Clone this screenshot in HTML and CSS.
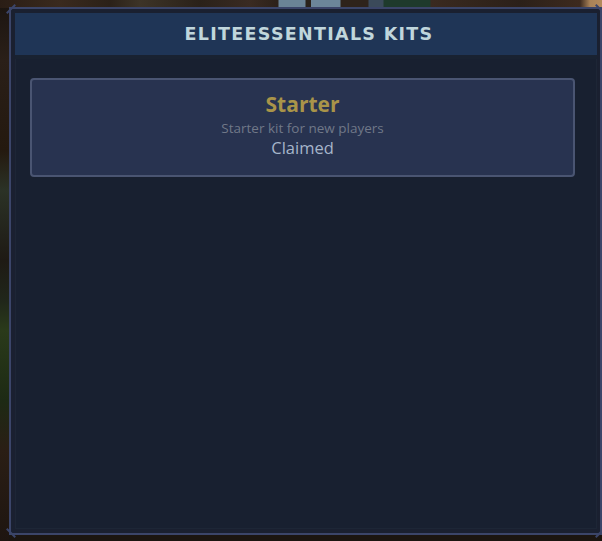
FILE: index.html
```html
<!DOCTYPE html>
<html>
<head>
<meta charset="utf-8">
<link rel="stylesheet" href="styles.css">
</head>
<body>
<div class="panel">
  <span class="notch tl"></span>
  <span class="notch tr"></span>
  <span class="notch bl"></span>
  <span class="notch br"></span>
  <div class="frame">
    <div class="header"><h1 class="title">ELITEESSENTIALS KITS</h1></div>
    <div class="content">
      <div class="kit">
        <div class="kit-name">Starter</div>
        <div class="kit-desc">Starter kit for new players</div>
        <div class="kit-status">Claimed</div>
      </div>
    </div>
  </div>
</div>
</body>
</html>
```

FILE: styles.css
```css
html, body {
  margin: 0;
  padding: 0;
}
body {
  width: 602px;
  height: 541px;
  overflow: hidden;
  padding-top: 7px;
  box-sizing: border-box;
  padding-left: 9px;
  background:
    linear-gradient(90deg,
      #2a1d15 0, #3a2a1e 60px, #2b2118 110px, #3d3427 140px, #2a2119 200px,
      #3a2b22 250px, #2c2119 278px,
      #6b8496 279px, #6b8496 305px, #2a221a 306px, #2a221a 311px,
      #6c8699 311px, #6c8699 340px, #2e231b 341px, #2e231b 368px,
      #3b4a5a 369px, #3b4a5a 383px, #1e3a2c 384px, #1e3a2c 430px,
      #3a2a20 431px, #2b2019 520px, #3d2a1e 580px, #a88258 590px, #b38a5c 602px)
      top left / 602px 8px no-repeat,
    linear-gradient(180deg,
      #1a1410 0, #2a1f18 60px, #24190f 150px, #2b3226 190px, #1e1a14 260px,
      #20261a 300px, #2a3a1a 330px, #1d2a14 400px, #2a1e15 450px, #1e1510 541px)
      left top / 9px 541px no-repeat,
    #1b1510;
  font-family: "Open Sans", "Noto Sans", sans-serif;
}

.panel {
  position: relative;
  width: 593px;
  height: 528px;
  box-sizing: border-box;
  border: 2px solid #3b4569;
  background: #1a2030;
  padding: 4px 3px 4px 4px;
}

.frame {
  height: 100%;
  display: flex;
  flex-direction: column;
  background: #182030;
  box-shadow: inset 0 0 0 1px #1d2636;
}

.header {
  height: 42px;
  flex: none;
  background: #1f3556;
  display: flex;
  align-items: center;
  justify-content: center;
  border-bottom: 4px solid #192231;
}

.title {
  margin: 0;
  font-family: "DejaVu Sans", sans-serif;
  font-size: 17.5px;
  font-weight: 700;
  letter-spacing: 1.3px;
  color: #c0d6dc;
  padding-left: 6px;
}

.content {
  flex: 1;
  padding: 19px 22px 0 15px;
}

.kit {
  height: 99px;
  box-sizing: border-box;
  border: 2px solid #4a5572;
  border-radius: 4px;
  background: #283350;
  display: flex;
  flex-direction: column;
  align-items: center;
  padding-top: 10px;
}

.kit-name {
  font-size: 21px;
  font-weight: 700;
  color: #a99449;
  line-height: 28px;
}

.kit-desc {
  font-size: 13.5px;
  color: #707888;
  line-height: 18px;
  margin-top: 1px;
}

.kit-status {
  font-size: 16.5px;
  color: #a6b5ca;
  line-height: 22px;
}

.notch {
  position: absolute;
  width: 8px;
  height: 8px;
}
.notch::before {
  content: "";
  position: absolute;
  left: -2px;
  top: 3px;
  width: 12px;
  height: 2px;
  background: #3b4569;
  transform: rotate(-45deg);
}
.notch.tl { left: -4px; top: -4px; }
.notch.br { right: -4px; bottom: -4px; }
.notch.tr { right: -4px; top: -4px; }
.notch.bl { left: -4px; bottom: -4px; }
.notch.tr::before, .notch.bl::before { transform: rotate(45deg); }
```
